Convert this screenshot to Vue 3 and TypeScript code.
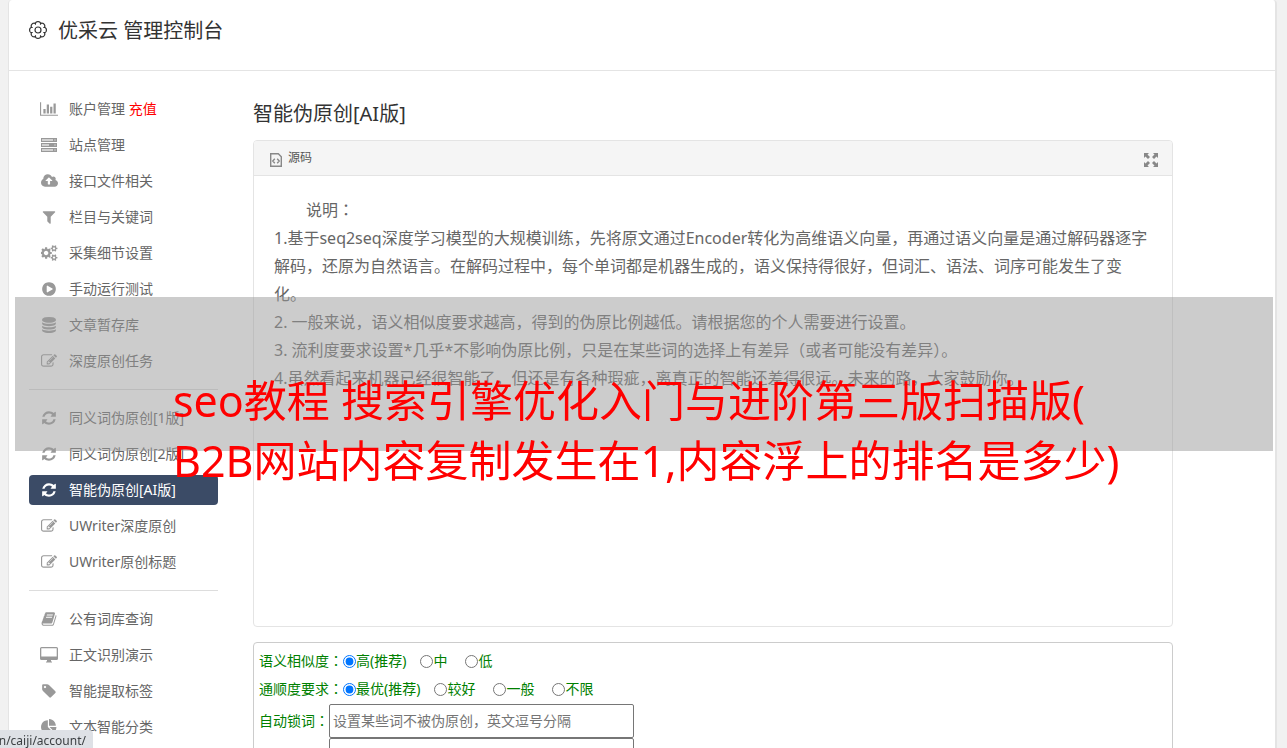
<script setup lang="ts">
interface Shape {
  box: string
  w: number
  d: string
  soft?: string
}

interface NavItem {
  label: string
  icon: string
  extra?: string
  active?: boolean
}

interface Choice {
  label: string
  recommended?: boolean
}

interface ChoiceGroup {
  name: string
  title: string
  options: Choice[]
}

const cog =
  'M832 896q0-106-75-181t-181-75-181 75-75 181 75 181 181 75 181-75 75-181zm768 512q0-52-38-90t-90-38-90 38-38 90q0 53 37.5 90.5t90.5 37.5 90.5-37.5 37.5-90.5zm0-1024q0-52-38-90t-90-38-90 38-38 90q0 53 37.5 90.5t90.5 37.5 90.5-37.5 37.5-90.5zm-384 421v185q0 10-7 19.5t-16 10.5l-155 24q-11 35-32 76 34 48 90 115 7 11 7 20 0 12-7 19-23 30-82.5 89.5t-78.5 59.5q-11 0-21-7l-115-90q-37 19-77 31-11 108-23 155-7 24-30 24h-186q-11 0-20-7.5t-10-17.5l-23-153q-34-10-75-31l-118 89q-7 7-20 7-11 0-21-8-144-133-144-160 0-9 7-19 10-14 41-53t47-61q-23-44-35-82l-152-24q-10-1-17-9.5t-7-19.5v-185q0-10 7-19.5t16-10.5l155-24q11-35 32-76-34-48-90-115-7-11-7-20 0-12 7-20 22-30 82-89t79-59q11 0 21 7l115 90q34-18 77-32 11-108 23-154 7-24 30-24h186q11 0 20 7.5t10 17.5l23 153q34 10 75 31l118-89q8-7 20-7 11 0 21 8 144 133 144 160 0 8-7 19-12 16-42 54t-45 60q23 48 34 82l152 23q10 2 17 10.5t7 19.5zm640 533v140q0 16-149 31-12 27-30 52 51 113 51 138 0 4-4 7-122 71-124 71-8 0-46-47t-52-68q-20 2-30 2t-30-2q-14 21-52 68t-46 47q-2 0-124-71-4-3-4-7 0-25 51-138-18-25-30-52-149-15-149-31v-140q0-16 149-31 13-29 30-52-51-113-51-138 0-4 4-7 4-2 35-20t59-34 30-16q8 0 46 46.5t52 67.5q20-2 30-2t30 2q51-71 92-112l6-2q4 0 124 70 4 3 4 7 0 25-51 138 17 23 30 52 149 15 149 31zm0-1024v140q0 16-149 31-12 27-30 52 51 113 51 138 0 4-4 7-122 71-124 71-8 0-46-47t-52-68q-20 2-30 2t-30-2q-14 21-52 68t-46 47q-2 0-124-71-4-3-4-7 0-25 51-138-18-25-30-52-149-15-149-31v-140q0-16 149-31 13-29 30-52-51-113-51-138 0-4 4-7 4-2 35-20t59-34 30-16q8 0 46 46.5t52 67.5q20-2 30-2t30 2q51-71 92-112l6-2q4 0 124 70 4 3 4 7 0 25-51 138 17 23 30 52 149 15 149 31z'

const shapes: Record<string, Shape> = {
  chart: {
    box: '0 0 2048 1792',
    w: 18,
    d: 'M640 896v512h-256v-512h256zm384-512v1024h-256v-1024h256zm1024 1152v128h-2048v-1536h128v1408h1920zm-640-896v768h-256v-768h256zm384-384v1152h-256v-1152h256z',
  },
  server: {
    box: '0 0 16 16',
    w: 16,
    d: 'M0 1h16v4H0zM1 2v2h11V2zM0 6h16v4H0zM1 7v2h7V7zM0 11h16v4H0zM1 12v2h11v-2zM13.500 2.500h1v1h-1zM13.500 7.500h1v1h-1zM13.500 12.500h1v1h-1z',
    soft: 'M1 2h11v2H1zM1 7h7v2H1zM1 12h11v2H1z',
  },
  cloud: {
    box: '0 0 1920 1792',
    w: 17,
    d: 'M1280 864q0-14-9-23l-352-352q-9-9-23-9t-23 9l-351 351q-10 12-10 24 0 14 9 23t23 9h224v352q0 13 9.500 22.500t22.500 9.500h192q13 0 22.500-9.500t9.500-22.500v-352h224q13 0 22.500-9.500t9.500-22.500zm640 288q0 159-112.500 271.500t-271.500 112.500h-1088q-185 0-316.500-131.500t-131.500-316.500q0-130 70-240t188-165q-2-30-2-43 0-212 150-362t362-150q156 0 285.500 87t188.500 231q71-62 166-62 106 0 181 75t75 181q0 76-41 138 130 31 213.500 135.500t83.500 238.500z',
  },
  filter: {
    box: '0 0 1792 1792',
    w: 16,
    d: 'M1595 295q17 41-14 70l-493 493v742q0 42-39 59-13 5-25 5-27 0-45-19l-256-256q-19-19-19-45v-486l-493-493q-31-29-14-70 17-39 59-39h1280q42 0 59 39z',
  },
  cogs: { box: '0 0 1920 1792', w: 17, d: cog },
  play: {
    box: '0 0 1792 1792',
    w: 16,
    d: 'M896 128q209 0 385.500 103t279.500 279.500 103 385.500-103 385.500-279.500 279.500-385.500 103-385.500-103-279.500-279.500-103-385.500 103-385.500 279.500-279.500 385.500-103zm384 823q32-18 32-55t-32-55l-544-320q-31-19-64-1-32 19-32 56v640q0 37 32 56 16 8 32 8 17 0 32-9z',
  },
  database: {
    box: '0 0 1792 1792',
    w: 16,
    d: 'M896 768q237 0 443-43t325-127v170q0 69-103 128t-280 93.500-385 34.500-385-34.500-280-93.500-103-128v-170q119 84 325 127t443 43zm0 768q237 0 443-43t325-127v170q0 69-103 128t-280 93.500-385 34.500-385-34.500-280-93.500-103-128v-170q119 84 325 127t443 43zm0-384q237 0 443-43t325-127v170q0 69-103 128t-280 93.500-385 34.500-385-34.500-280-93.500-103-128v-170q119 84 325 127t443 43zm0-1152q208 0 385 34.500t280 93.500 103 128v128q0 69-103 128t-280 93.500-385 34.500-385-34.500-280-93.500-103-128v-128q0-69 103-128t280-93.500 385-34.500z',
  },
  edit: {
    box: '0 0 1792 1792',
    w: 16,
    d: 'M888 1184l116-116-152-152-116 116v56h96v96h56zm440-720q-16-16-33 1l-350 350q-17 17-1 33t33-1l350-350q17-17 1-33zm80 594v190q0 119-84.500 203.500t-203.500 84.500h-832q-119 0-203.500-84.500t-84.500-203.500v-832q0-119 84.500-203.500t203.500-84.500h832q63 0 117 25 15 7 18 23 3 17-9 29l-49 49q-14 14-32 8-23-6-45-6h-832q-66 0-113 47t-47 113v832q0 66 47 113t113 47h832q66 0 113-47t47-113v-126q0-13 9-22l64-64q15-15 35-7t20 29zm-96-738l288 288-672 672h-288v-288zm444 132l-92 92-288-288 92-92q28-28 68-28t68 28l152 152q28 28 28 68t-28 68z',
  },
  refresh: {
    box: '0 0 1792 1792',
    w: 16,
    d: 'M1639 1056q0 5-1 7-64 268-268 434.500t-478 166.500q-146 0-282.500-55t-243.500-157l-129 129q-19 19-45 19t-45-19-19-45v-448q0-26 19-45t45-19h448q26 0 45 19t19 45-19 45l-137 137q71 66 161 102t187 36q134 0 250-65t186-179q11-17 53-117 8-23 30-23h192q13 0 22.500 9.500t9.500 22.500zm25-800v448q0 26-19 45t-45 19h-448q-26 0-45-19t-19-45 19-45l138-138q-148-137-349-137-134 0-250 65t-186 179q-11 17-53 117-8 23-30 23h-199q-13 0-22.500-9.500t-9.500-22.500v-7q65-268 270-434.500t480-166.500q146 0 284 55.500t245 156.500l130-129q19-19 45-19t45 19 19 45z',
  },
  book: {
    box: '0 0 1792 1792',
    w: 16,
    d: 'M1703 478q40 57 18 129l-275 906q-19 64-76.500 107.500t-122.500 43.500h-923q-77 0-148.500-53.500t-99.500-131.500q-24-67-2-127 0-4 3-27t4-37q1-8-3-21.500t-3-19.500q2-11 8-21t16.500-23.500 16.500-23.500q23-38 45-91.500t30-91.500q3-10 .5-30t-.5-28q3-11 17-28t17-23q21-36 42-92t25-90q1-9-2.500-32t.5-28q4-13 22-30.500t22-22.500q19-26 42.500-84.500t27.500-96.500q1-8-3-25.500t-2-26.500q2-8 9-18t18-23 17-21q8-12 16.500-30.500t15-35 16-36 19.500-32 26.500-23.500 36-11.500 47.500 5.500l-1 3q38-9 51-9h761q74 0 114 56t18 130l-274 906q-36 119-71.500 153.500t-128.500 34.500h-869q-27 0-38 15-11 16-1 43 24 70 144 70h923q29 0 56-15.500t35-41.500l300-987q7-22 5-57 38 15 59 43zm-1064 2q-4 13 2 22.500t20 9.500h608q13 0 25.500-9.500t16.500-22.500l21-64q4-13-2-22.500t-20-9.500h-608q-13 0-25.500 9.500t-16.500 22.500zm-83 256q-4 13 2 22.500t20 9.500h608q13 0 25.500-9.500t16.500-22.500l21-64q4-13-2-22.500t-20-9.500h-608q-13 0-25.500 9.500t-16.500 22.500z',
  },
  desktop: {
    box: '0 0 18 16',
    w: 18,
    d: 'M1.500 0h15A1.500 1.500 0 0 1 18 1.500v10a1.500 1.500 0 0 1-1.500 1.500H11v1l1 1v.6H6V15l1-1v-1H1.500A1.500 1.500 0 0 1 0 11.500v-10A1.500 1.500 0 0 1 1.500 0zM1.300 1.300v8.200h15.400V1.300z',
  },
  tag: {
    box: '0 0 1792 1792',
    w: 16,
    d: 'M576 448q0-53-37.500-90.500t-90.500-37.500-90.500 37.500-37.500 90.500 37.500 90.500 90.500 37.500 90.500-37.500 37.500-90.500zm1067 576q0 53-37 90l-491 492q-39 37-91 37-53 0-90-37l-715-716q-38-37-64.500-101t-26.500-117v-416q0-52 38-90t90-38h416q53 0 117 26.500t102 64.500l715 714q37 39 37 91z',
  },
  pie: {
    box: '0 0 1792 1792',
    w: 16,
    d: 'M768 890l546 546q-106 108-247.500 168t-298.500 60q-209 0-385.500-103t-279.500-279.500-103-385.500 103-385.500 279.500-279.500 385.500-103v762zm187 6h773q0 157-60 298.500t-168 247.500zm709-128h-768v-768q209 0 385.500 103t279.500 279.500 103 385.500z',
  },
}

const groups: NavItem[][] = [
  [
    { label: '账户管理', extra: '充值', icon: 'chart' },
    { label: '站点管理', icon: 'server' },
    { label: '接口文件相关', icon: 'cloud' },
    { label: '栏目与关键词', icon: 'filter' },
    { label: '采集细节设置', icon: 'cogs' },
    { label: '手动运行测试', icon: 'play' },
    { label: '文章暂存库', icon: 'database' },
    { label: '深度原创任务', icon: 'edit' },
  ],
  [
    { label: '同义词伪原创[1版]', icon: 'refresh' },
    { label: '同义词伪原创[2版]', icon: 'refresh' },
    { label: '智能伪原创[AI版]', icon: 'refresh', active: true },
    { label: 'UWriter深度原创', icon: 'edit' },
    { label: 'UWriter原创标题', icon: 'edit' },
  ],
  [
    { label: '公有词库查询', icon: 'book' },
    { label: '正文识别演示', icon: 'desktop' },
    { label: '智能提取标签', icon: 'tag' },
    { label: '文本智能分类', icon: 'pie' },
  ],
]

const notes: string[] = [
  '1.基于seq2seq深度学习模型的大规模训练，先将原文通过Encoder转化为高维语义向量，再通过语义向量是通过解码器逐字解码，还原为自然语言。在解码过程中，每个单词都是机器生成的，语义保持得很好，但词汇、语法、词序可能发生了变化。',
  '2. 一般来说，语义相似度要求越高，得到的伪原比例越低。请根据您的个人需要进行设置。',
  '3. 流利度要求设置*几乎*不影响伪原比例，只是在某些词的选择上有差异（或者可能没有差异）。',
  '4.虽然看起来机器已经很智能了，但还是有各种瑕疵，离真正的智能还差得很远。未来的路，大家鼓励你。',
]

const choices: ChoiceGroup[] = [
  {
    name: 'similarity',
    title: '语义相似度',
    options: [{ label: '高(推荐)', recommended: true }, { label: '中' }, { label: '低' }],
  },
  {
    name: 'fluency',
    title: '通顺度要求',
    options: [
      { label: '最优(推荐)', recommended: true },
      { label: '较好' },
      { label: '一般' },
      { label: '不限' },
    ],
  },
]

// Outline of the header gear: eight rounded lobes around the centre.
const gearPath = (() => {
  const points: string[] = []
  for (let i = 0; i < 128; i++) {
    const a = (i / 128) * Math.PI * 2
    const r = 6.6 + 1.8 * Math.sqrt(Math.abs(Math.cos(a * 4)))
    points.push(`${(9 + r * Math.sin(a)).toFixed(2)} ${(9 - r * Math.cos(a)).toFixed(2)}`)
  }
  return `M${points.join('L')}Z`
})()
</script>

<template>
  <div class="shell">
    <header class="top">
      <svg class="gear" viewBox="0 0 18 18" aria-hidden="true">
        <path :d="gearPath" />
        <circle cx="9" cy="9" r="3" />
      </svg>
      <h1>优采云 管理控制台</h1>
    </header>

    <div class="body">
      <nav class="side">
        <template v-for="(group, g) in groups" :key="g">
          <hr v-if="g > 0" />
          <a
            v-for="item in group"
            :key="item.label"
            href="#"
            class="item"
            :class="{ active: item.active }"
          >
            <span class="icon">
              <svg
                :viewBox="shapes[item.icon].box"
                :width="shapes[item.icon].w"
                height="16"
                aria-hidden="true"
              >
                <path v-if="shapes[item.icon].soft" class="soft" :d="shapes[item.icon].soft" />
                <path fill-rule="evenodd" :d="shapes[item.icon].d" />
              </svg>
            </span>
            <span>{{ item.label }} <em v-if="item.extra">{{ item.extra }}</em></span>
          </a>
        </template>
      </nav>

      <main class="main">
        <h2>智能伪原创[AI版]</h2>

        <section class="editor">
          <div class="toolbar">
            <button type="button" class="tool">
              <svg width="12" height="14" viewBox="0 0 12 14" aria-hidden="true">
                <path class="line" d="M.7.7h7.600l3 3v9.600H.7zM4.800 5.800L2.800 8l2 2.200M7.200 5.800l2 2.200-2 2.200" />
              </svg>
              <span>源码</span>
            </button>
            <button type="button" class="tool" aria-label="全屏">
              <svg width="14" height="14" viewBox="0 0 14 14" aria-hidden="true">
                <path
                  d="M0 0h5L3.500 1.500 6 4 4 6 1.500 3.500 0 5zM14 0v5l-1.500-1.500L10 6 8 4l2.500-2.500L9 0zM0 14V9l1.500 1.500L4 8l2 2-2.500 2.500L5 14zM14 14H9l1.500-1.500L8 10l2-2 2.500 2.500L14 9z"
                />
              </svg>
            </button>
          </div>
          <div class="content">
            <p class="lead">说明<span class="colon">：</span></p>
            <p v-for="note in notes" :key="note">{{ note }}</p>
          </div>
        </section>

        <form class="options">
          <fieldset v-for="choice in choices" :key="choice.name" class="row">
            <span>{{ choice.title }}<span class="colon">：</span></span>
            <label
              v-for="option in choice.options"
              :key="option.label"
              class="choice"
              :class="{ recommended: option.recommended }"
            >
              <input type="radio" :name="choice.name" :checked="option.recommended" />{{ option.label }}
            </label>
          </fieldset>
          <div class="locks">
            <label for="lock-words">自动锁词<span class="colon">：</span></label>
            <div class="fields">
              <input id="lock-words" type="text" placeholder="设置某些词不被伪原创，英文逗号分隔" />
              <input type="text" aria-label="锁词" />
            </div>
          </div>
        </form>
      </main>
    </div>

    <div class="banner">
      <p>seo教程 搜索引擎优化入门与进阶第三版扫描版(<br />B2B网站内容复制发生在1,内容浮上的排名是多少)</p>
    </div>
    <div class="status">n/caiji/account/</div>
  </div>
</template>

<style>
html,
body {
  height: 100%;
  overflow: hidden;
  background: #f1f1f1;
}
</style>

<style scoped>
.shell {
  box-sizing: border-box;
  height: 100vh;
  margin: 0 10px 0 8px;
  overflow: hidden;
  border: solid #e4e4e4;
  border-width: 0 2px 0 1px;
  border-radius: 4px 4px 0 0;
  background: #fff;
  color: #666;
  font: 14px/20px "Noto Sans", "Noto Sans CJK SC", sans-serif;
}

.top {
  display: flex;
  align-items: center;
  gap: 11px;
  height: 62px;
  padding: 0 20px 8px;
  border-bottom: 1px solid #e4e4e4;
}

.gear {
  width: 18px;
  height: 18px;
  margin-bottom: 2px;
  fill: none;
  stroke: #333;
  stroke-width: 1.2;
}

h1,
h2 {
  margin: 0;
  color: #333;
  font-size: 20px;
  font-weight: 400;
  line-height: 28px;
}

.body {
  display: flex;
  gap: 35px;
  padding: 23px 102px 0 20px;
}

.side {
  display: flex;
  flex: 0 0 189px;
  flex-direction: column;
  gap: 6px;
}

.side hr {
  width: 100%;
  margin: 7px 0;
  border: 0;
  border-top: 1px solid #ddd;
}

.item {
  display: flex;
  align-items: center;
  height: 30px;
  border-radius: 4px;
  color: #666;
  text-decoration: none;
  white-space: nowrap;
}

.item em {
  color: #f00;
  font-style: normal;
}

.icon {
  display: flex;
  justify-content: center;
  width: 40px;
}

.icon svg {
  fill: #999;
}

.icon .soft {
  opacity: 0.45;
}

.item.active {
  background: #3b4b66;
  color: #fff;
}

.active svg {
  fill: #fff;
}

.main {
  flex: 1;
  min-width: 0;
}

h2 {
  margin: 6px 0 12px;
}

.editor {
  box-sizing: border-box;
  min-height: 487px;
  border: 1px solid #e4e4e4;
  border-radius: 4px;
}

.toolbar {
  display: flex;
  align-items: center;
  justify-content: space-between;
  height: 34px;
  padding: 0 14px 0 16px;
  border-bottom: 1px solid #e4e4e4;
  border-radius: 3px 3px 0 0;
  background: #f5f5f5;
}

.tool {
  display: flex;
  align-items: center;
  gap: 6px;
  padding: 0;
  border: 0;
  background: none;
  color: #555;
  font: inherit;
  font-size: 12px;
}

.tool svg {
  margin-top: 4px;
  fill: #888;
}

.tool .line {
  fill: none;
  stroke: #888;
  stroke-width: 1.4;
}

.content {
  padding: 20px;
  font-size: 16px;
  line-height: 28px;
}

.content p {
  margin: 0;
}

.content .lead {
  text-indent: 2em;
}

.colon {
  font-family: "Noto Sans CJK TC", sans-serif;
  line-height: 1;
}

.options {
  height: 200px;
  margin-top: 15px;
  padding: 4px 5px;
  border: 1px solid #ccc;
  border-radius: 4px;
  color: #008000;
}

.row {
  display: flex;
  align-items: center;
  height: 28px;
  margin: 0;
  padding: 0;
  border: 0;
}

.choice {
  display: flex;
  align-items: center;
  margin-right: 18px;
}

.choice.recommended {
  margin-right: 14px;
}

.choice input {
  width: 13px;
  height: 13px;
  margin: 0;
}

.locks {
  display: flex;
  margin-top: 1px;
}

.locks label {
  line-height: 34px;
}

.fields {
  display: flex;
  flex-direction: column;
}

.fields input {
  box-sizing: border-box;
  width: 305px;
  height: 34px;
  padding: 0 3px 2px;
  border: 1px solid #767676;
  border-radius: 2px;
  font: inherit;
}

.banner {
  position: fixed;
  top: 297px;
  right: 14px;
  left: 15px;
  height: 154px;
  background: rgba(153, 153, 153, 0.5);
}

.banner p {
  margin: 74px 0 0 158px;
  color: #f00;
  font-size: 43px;
  line-height: 60px;
  white-space: nowrap;
}

.status {
  position: fixed;
  bottom: 0;
  left: 0;
  display: flex;
  justify-content: flex-end;
  box-sizing: border-box;
  width: 93px;
  height: 18px;
  padding-right: 7px;
  overflow: hidden;
  border-radius: 0 4px 0 0;
  background: #dee1e6;
  color: #3c4043;
  font-size: 12px;
  line-height: 22px;
}
</style>
